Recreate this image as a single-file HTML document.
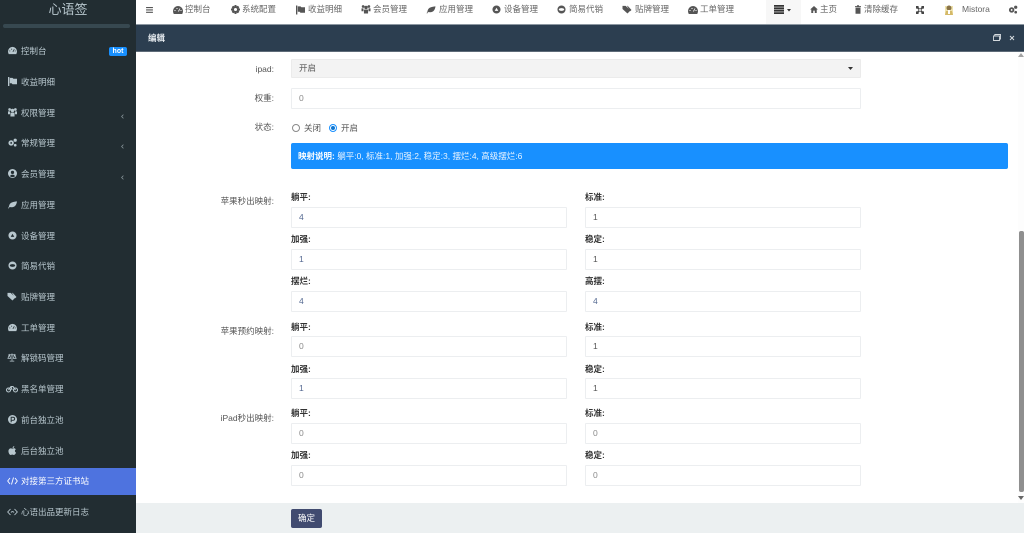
<!DOCTYPE html>
<html lang="zh"><head><meta charset="utf-8"><title>编辑</title>
<style>
html,body{margin:0;padding:0;width:1024px;height:533px;overflow:hidden;background:#fff;font-family:"Liberation Sans","Noto Sans CJK SC",sans-serif;font-size:8.5px;color:#555}
div,span,svg{position:absolute;white-space:nowrap}
#w{left:0;top:0;width:1024px;height:533px;overflow:hidden;filter:blur(.3px)}
.t{line-height:12px;height:12px}
.sb{left:0;top:0;width:136px;height:533px;background:#222d32}
.si{left:21px;color:#b8c7ce;line-height:12px;height:12px}
.ic{fill:#b8c7ce}
.ti{fill:#555}
.n{color:#666;line-height:12px;height:12px;top:3px}
.l{color:#555;line-height:12px;height:12px;text-align:right;left:180px;width:94px}
.h{color:#333;font-weight:bold;line-height:12px;height:12px}
.in{height:19px;line-height:19px;border:1px solid #eceef0;background:#fff;box-sizing:content-box;color:#8a8a8a;text-indent:7px;border-radius:1px}
.a{left:291px;width:274px}.b{left:585px;width:274px}
.v{color:#566a92}
.d{color:#555}
</style></head><body><div id="w">
<div class="sb"></div>
<div style="left:0;top:1px;width:136px;text-align:center;color:#b8c7ce;font-size:13px;line-height:18px">心语签</div>
<div style="left:3px;top:24px;width:127px;height:4px;background:#374850;border-radius:2px"></div>

<svg class="ic" style="left:8px;top:46px" width="9" height="9" viewBox="0 0 10 10"><path fill-rule="evenodd" d="M5 1a5 5 0 0 0-5 5c0 1 .3 2 .8 3h8.400c.5-1 .8-2 .8-3a5 5 0 0 0-5-5zM5 6.200l1.800-3 .5.3L5.900 6.600zM1.500 5h1v1h-1zM3.500 3h1v1h-1zM7.500 5h1v1h-1z"/></svg>
<div class="si" style="top:45px">控制台</div>
<div style="left:109px;top:47px;width:18px;height:9px;background:#1890ff;border-radius:2px;color:#fff;font-size:7px;font-weight:bold;line-height:9px;text-align:center">hot</div>

<svg class="ic" style="left:8px;top:77px" width="9" height="9" viewBox="0 0 10 10"><path d="M0 0h1.500v10H0zM2 1h3l1 1h4v6H5L4 7H2z"/></svg>
<div class="si" style="top:76px">收益明细</div>

<svg class="ic" style="left:8px;top:108px" width="9" height="9" viewBox="0 0 10 10"><circle cx="1.800" cy="1.700" r="1.500"/><circle cx="8.200" cy="1.700" r="1.500"/><circle cx="5" cy="2.800" r="1.900"/><path d="M0 3.800h2.200V7H0zM7.800 3.800H10V7H7.800zM2.700 5.200h4.600V9.500H2.700z"/></svg>
<div class="si" style="top:107px">权限管理</div>
<svg style="left:121px;top:114px" width="3" height="5" viewBox="0 0 4 6"><path d="M3.200 .5L.8 3l2.400 2.500" fill="none" stroke="#8a979d"/></svg>

<svg class="ic" style="left:8px;top:138px" width="9" height="9" viewBox="0 0 10 10"><circle cx="3.500" cy="5.500" r="3"/><circle cx="8" cy="2.500" r="1.800"/><circle cx="8" cy="8" r="1.500"/><circle cx="3.500" cy="5.500" r="1" fill="#222d32"/></svg>
<div class="si" style="top:137px">常规管理</div>
<svg style="left:121px;top:144px" width="3" height="5" viewBox="0 0 4 6"><path d="M3.200 .5L.8 3l2.400 2.500" fill="none" stroke="#8a979d"/></svg>

<svg class="ic" style="left:8px;top:169px" width="9" height="9" viewBox="0 0 10 10"><path fill-rule="evenodd" d="M5 0a5 5 0 1 0 0 10A5 5 0 0 0 5 0zM5 2a1.800 1.800 0 1 1 0 3.600A1.800 1.800 0 0 1 5 2zM2.200 8c.5-1.200 1.500-1.800 2.800-1.800S7.300 6.800 7.800 8C7 8.700 6 9 5 9s-2-.3-2.800-1z"/></svg>
<div class="si" style="top:168px">会员管理</div>
<svg style="left:121px;top:175px" width="3" height="5" viewBox="0 0 4 6"><path d="M3.200 .5L.8 3l2.400 2.500" fill="none" stroke="#8a979d"/></svg>

<svg class="ic" style="left:8px;top:200px" width="9" height="9" viewBox="0 0 10 10"><path d="M0 9c1-1 1-2 1.500-3.500C2.500 2.500 6 2 10 1.500 9.500 5 8 8 4 8 3 8 2 7.800 1.500 8L.8 9.500z"/></svg>
<div class="si" style="top:199px">应用管理</div>

<svg class="ic" style="left:8px;top:231px" width="9" height="9" viewBox="0 0 10 10"><path fill-rule="evenodd" d="M5 .5a4.500 4.500 0 1 0 0 9 4.500 4.500 0 0 0 0-9zM5 3L7 6.500H3z"/></svg>
<div class="si" style="top:230px">设备管理</div>

<svg class="ic" style="left:8px;top:261px" width="9" height="9" viewBox="0 0 10 10"><path fill-rule="evenodd" d="M5 .5a4.500 4.500 0 1 0 0 9 4.500 4.500 0 0 0 0-9zM2 5a3 1.500 0 1 0 6 0 3 1.500 0 0 0-6 0z"/></svg>
<div class="si" style="top:260px">简易代销</div>

<svg class="ic" style="left:7px;top:292px" width="10" height="9" viewBox="0 0 10 10"><path d="M0 1h3.500L9 6 5.500 9.500 0 4.500z"/><path d="M5 1h.8L10 5.500 8.500 7z"/></svg>
<div class="si" style="top:291px">贴牌管理</div>

<svg class="ic" style="left:8px;top:323px" width="9" height="9" viewBox="0 0 10 10"><path fill-rule="evenodd" d="M5 1a5 5 0 0 0-5 5c0 1 .3 2 .8 3h8.400c.5-1 .8-2 .8-3a5 5 0 0 0-5-5zM5 6.200l1.800-3 .5.3L5.900 6.600zM1.500 5h1v1h-1zM3.500 3h1v1h-1zM7.500 5h1v1h-1z"/></svg>
<div class="si" style="top:322px">工单管理</div>

<svg style="left:7px;top:353px" width="10" height="9" viewBox="0 0 10 10" fill="none" stroke="#b8c7ce" stroke-width=".9"><path d="M5 .5v8M2.500 9h5M1 2h8M2 2L.5 6h3zM8 2L6.500 6h3z"/></svg>
<div class="si" style="top:352px">解锁码管理</div>

<svg style="left:6px;top:385px" width="12" height="8" viewBox="0 0 12 8" fill="none" stroke="#b8c7ce" stroke-width="1.100"><circle cx="2.500" cy="5" r="2"/><circle cx="9.500" cy="5" r="2"/><path d="M2.500 5L5 1.500h2l2.500 3.500M5 1.500L6 5"/></svg>
<div class="si" style="top:383px">黑名单管理</div>

<svg style="left:8px;top:415px" width="9" height="9" viewBox="0 0 10 10"><circle cx="5" cy="5" r="5" fill="#b8c7ce"/><path d="M3.500 8V2.500h2.200a1.600 1.600 0 0 1 0 3.400H3.500" fill="none" stroke="#222d32" stroke-width="1.100"/></svg>
<div class="si" style="top:414px">前台独立池</div>

<svg class="ic" style="left:8px;top:446px" width="9" height="9" viewBox="0 0 10 10"><path d="M5 3c1-.7 2.800-.7 3.700.7-1.500 1-1.200 3 .3 3.700-.6 1.400-1.500 2.600-2.500 2.600-.7 0-1-.4-1.700-.4s-1 .4-1.700.4C1.700 10 .5 7.500.5 5.800.5 3.600 2 2.600 3 2.600c.8 0 1.400.4 2 .4zM5 2.500C5 1.300 6 .2 7 0c.1 1.200-.9 2.400-2 2.500z"/></svg>
<div class="si" style="top:445px">后台独立池</div>

<div style="left:0;top:468px;width:136px;height:27px;background:#4e73df"></div>
<svg style="left:7px;top:477px" width="11" height="8" viewBox="0 0 11 8" fill="none" stroke="#fff" stroke-width=".9"><path d="M3 1L.7 4 3 7M8 1l2.300 3L8 7M6.500 .5l-2 7"/></svg>
<div class="si" style="top:475px;color:#fff">对接第三方证书站</div>

<svg style="left:7px;top:508px" width="11" height="8" viewBox="0 0 11 8" fill="none" stroke="#b8c7ce" stroke-width=".9"><path d="M3.500 1L.7 4l2.800 3M7.500 1l2.800 3-2.800 3M4 4.500c.8-1.300 2.200-1.300 3 0"/></svg>
<div class="si" style="top:506px">心语出品更新日志</div>

<!-- top bar -->
<div style="left:136px;top:0;width:888px;height:24px;background:#fff"></div>
<svg style="left:146px;top:7px" width="7" height="6" viewBox="0 0 8 7" fill="#555"><path d="M0 0h8v1.300H0zM0 2.800h8v1.300H0zM0 5.600h8v1.300H0z"/></svg>

<svg class="ti" style="left:173px;top:5px" width="10" height="10" viewBox="0 0 10 10"><path fill-rule="evenodd" d="M5 1a5 5 0 0 0-5 5c0 1 .3 2 .8 3h8.400c.5-1 .8-2 .8-3a5 5 0 0 0-5-5zM5 6.200l1.800-3 .5.3L5.900 6.600zM1.500 5h1v1h-1zM3.500 3h1v1h-1zM7.500 5h1v1h-1z"/></svg>
<div class="n" style="left:185px">控制台</div>
<svg class="ti" style="left:231px;top:5px" width="9" height="9" viewBox="0 0 10 10"><path fill-rule="evenodd" d="M4 0h2l.3 1.500 1.300-.7L9.200 2.300 8.500 3.600 10 4v2l-1.500.4.700 1.300-1.600 1.500-1.300-.7L6 10H4l-.3-1.500-1.300.7L.8 7.700l.7-1.300L0 6V4l1.500-.4-.7-1.300L2.400.8l1.300.7zM5 3.300a1.700 1.700 0 1 0 0 3.400 1.700 1.700 0 0 0 0-3.400z"/></svg>
<div class="n" style="left:242px">系统配置</div>
<svg class="ti" style="left:296px;top:5px" width="9" height="10" viewBox="0 0 10 10"><path d="M0 0h1.500v10H0zM2 1h3l1 1h4v6H5L4 7H2z"/></svg>
<div class="n" style="left:308px">收益明细</div>
<svg class="ti" style="left:361px;top:5px" width="10" height="9" viewBox="0 0 10 10"><circle cx="1.800" cy="1.700" r="1.500"/><circle cx="8.200" cy="1.700" r="1.500"/><circle cx="5" cy="2.800" r="1.900"/><path d="M0 3.800h2.200V7H0zM7.800 3.800H10V7H7.800zM2.700 5.200h4.600V9.500H2.700z"/></svg>
<div class="n" style="left:373px">会员管理</div>
<svg class="ti" style="left:426px;top:5px" width="10" height="9" viewBox="0 0 10 10"><path d="M0 9c1-1 1-2 1.500-3.500C2.500 2.500 6 2 10 1.500 9.500 5 8 8 4 8 3 8 2 7.800 1.500 8L.8 9.500z"/></svg>
<div class="n" style="left:439px">应用管理</div>
<svg class="ti" style="left:492px;top:5px" width="9" height="9" viewBox="0 0 10 10"><path fill-rule="evenodd" d="M5 .5a4.500 4.500 0 1 0 0 9 4.500 4.500 0 0 0 0-9zM5 3L7 6.500H3z"/></svg>
<div class="n" style="left:504px">设备管理</div>
<svg class="ti" style="left:557px;top:5px" width="9" height="9" viewBox="0 0 10 10"><path fill-rule="evenodd" d="M5 .5a4.500 4.500 0 1 0 0 9 4.500 4.500 0 0 0 0-9zM2 5a3 1.500 0 1 0 6 0 3 1.500 0 0 0-6 0z"/></svg>
<div class="n" style="left:569px">简易代销</div>
<svg class="ti" style="left:622px;top:5px" width="10" height="9" viewBox="0 0 10 10"><path d="M0 1h3.500L9 6 5.500 9.500 0 4.500z"/><path d="M5 1h.8L10 5.500 8.500 7z"/></svg>
<div class="n" style="left:635px">贴牌管理</div>
<svg class="ti" style="left:688px;top:5px" width="10" height="10" viewBox="0 0 10 10"><path fill-rule="evenodd" d="M5 1a5 5 0 0 0-5 5c0 1 .3 2 .8 3h8.400c.5-1 .8-2 .8-3a5 5 0 0 0-5-5zM5 6.200l1.800-3 .5.3L5.900 6.600zM1.500 5h1v1h-1zM3.500 3h1v1h-1zM7.500 5h1v1h-1z"/></svg>
<div class="n" style="left:700px">工单管理</div>

<div style="left:766px;top:0;width:35px;height:24px;background:#f7f7f7"></div>
<svg style="left:774px;top:5px" width="10" height="9" viewBox="0 0 10 9" fill="#333"><path d="M0 0h10v1.800H0zM0 2.400h10v1.800H0zM0 4.800h10v1.800H0zM0 7.200h10V9H0z"/></svg>
<svg style="left:787px;top:9px" width="4" height="2.500" viewBox="0 0 5 3" fill="#333"><path d="M0 0h5L2.500 3z"/></svg>
<svg class="ti" style="left:810px;top:6px" width="8" height="7" viewBox="0 0 10 9"><path d="M5 0l5 4.500H8.500V9H6V6H4v3H1.500V4.500H0z"/></svg>
<div class="n" style="left:820px">主页</div>
<svg class="ti" style="left:855px;top:5px" width="6" height="9" viewBox="0 0 7 10"><path fill-rule="evenodd" d="M0 1h2.300V0h2.400v1H7v1.200H0zM.6 2.800h5.800V10H.6z"/></svg>
<div class="n" style="left:864px">清除缓存</div>
<svg style="left:916px;top:6px" width="8" height="8" viewBox="0 0 8 8" fill="#444"><path d="M0 0h3L2.200 .9 4 2.700 2.700 4 .9 2.200 0 3zM8 0v3l-.9-.8L5.300 4 4 2.700 5.800.9 5 0zM0 8V5l.9.8L2.700 4 4 5.300 2.200 7.100 3 8zM8 8H5l.8-.9L4 5.300 5.300 4 7.100 5.800 8 5z"/></svg>
<svg style="left:944px;top:4px" width="10" height="12" viewBox="0 0 10 12"><rect x="1" y="2" width="8" height="9" fill="#efe3ae"/><circle cx="5" cy="4" r="2.500" fill="#8a7448"/><path d="M1 11l1-4h6l1 4z" fill="#d4b968"/><rect x="4" y="6" width="2" height="4" fill="#fff"/></svg>
<div class="n" style="left:962px">Mistora</div>
<svg class="ti" style="left:1008px;top:5px" width="10" height="9" viewBox="0 0 10 10"><circle cx="3.500" cy="5.500" r="3"/><circle cx="8" cy="2.500" r="1.800"/><circle cx="8" cy="8" r="1.500"/><circle cx="3.500" cy="5.500" r="1" fill="#fff"/></svg>

<!-- dialog title -->
<div style="left:136px;top:24px;width:888px;height:28px;background:#2c3e50;border-top:1px solid #8c97a1;border-bottom:1px solid #5e6b78;box-sizing:border-box"></div>
<div class="t" style="left:148px;top:32px;color:#e8edf1;font-weight:bold">编辑</div>
<svg style="left:993px;top:34px" width="8" height="7" viewBox="0 0 8 7" fill="none" stroke="#d5dade" stroke-width=".9"><path d="M.5 2h6v4.500h-6zM1.800 2V.5h5.700v4.500h-1"/></svg>
<svg style="left:1009px;top:35px" width="6" height="6" viewBox="0 0 6 6" fill="none" stroke="#d5dade"><path d="M1 1l4 4M5 1L1 5"/></svg>

<!-- form -->
<div class="l" style="top:63px">ipad:</div>
<div style="left:291px;top:59px;width:568px;height:17px;line-height:17px;border:1px solid #ebebeb;background:#f3f3f3;text-indent:7px;color:#555;border-radius:1px">开启</div>
<svg style="left:848px;top:67px" width="5" height="3" viewBox="0 0 5 3" fill="#333"><path d="M0 0h5L2.500 3z"/></svg>

<div class="l" style="top:92px">权重:</div>
<div class="in" style="left:291px;top:88px;width:568px">0</div>

<div class="l" style="top:121px">状态:</div>
<div style="left:292px;top:124px;width:6px;height:6px;border:1px solid #8a8a8a;border-radius:50%;background:#fff"></div>
<div class="t" style="left:304px;top:122px">关闭</div>
<div style="left:329px;top:124px;width:6px;height:6px;border:1px solid #1890ff;border-radius:50%;background:#fff"></div>
<div style="left:331px;top:126px;width:4px;height:4px;border-radius:50%;background:#1076d0"></div>
<div class="t" style="left:341px;top:122px">开启</div>

<div style="left:291px;top:143px;width:717px;height:26px;line-height:27px;background:#1890ff;border-radius:2px;color:#e8f3ff;text-indent:7px"><b style="color:#fff">映射说明:</b> 躺平:0, 标准:1, 加强:2, 稳定:3, 摆烂:4, 高级摆烂:6</div>

<div class="l" style="top:195px">苹果秒出映射:</div>
<div class="h" style="left:291px;top:191px">躺平:</div><div class="h" style="left:585px;top:191px">标准:</div>
<div class="in a v" style="top:207px">4</div><div class="in b d" style="top:207px">1</div>
<div class="h" style="left:291px;top:233px">加强:</div><div class="h" style="left:585px;top:233px">稳定:</div>
<div class="in a v" style="top:249px">1</div><div class="in b d" style="top:249px">1</div>
<div class="h" style="left:291px;top:275px">摆烂:</div><div class="h" style="left:585px;top:275px">高摆:</div>
<div class="in a v" style="top:291px">4</div><div class="in b v" style="top:291px">4</div>

<div class="l" style="top:325px">苹果预约映射:</div>
<div class="h" style="left:291px;top:321px">躺平:</div><div class="h" style="left:585px;top:321px">标准:</div>
<div class="in a" style="top:336px">0</div><div class="in b d" style="top:336px">1</div>
<div class="h" style="left:291px;top:363px">加强:</div><div class="h" style="left:585px;top:363px">稳定:</div>
<div class="in a v" style="top:378px">1</div><div class="in b d" style="top:378px">1</div>

<div class="l" style="top:412px">iPad秒出映射:</div>
<div class="h" style="left:291px;top:407px">躺平:</div><div class="h" style="left:585px;top:407px">标准:</div>
<div class="in a" style="top:423px">0</div><div class="in b" style="top:423px">0</div>
<div class="h" style="left:291px;top:449px">加强:</div><div class="h" style="left:585px;top:449px">稳定:</div>
<div class="in a" style="top:465px">0</div><div class="in b" style="top:465px">0</div>

<!-- scrollbar -->
<div style="left:1018px;top:52px;width:6px;height:451px;background:#fdfdfd"></div>
<svg style="left:1018px;top:53px" width="6" height="4" viewBox="0 0 6 4" fill="#a3a3a3"><path d="M3 0l3 4H0z"/></svg>
<div style="left:1019px;top:231px;width:5px;height:261px;background:#8f8f8f;border-radius:2px"></div>
<svg style="left:1018px;top:496px" width="6" height="4" viewBox="0 0 6 4" fill="#666"><path d="M0 0h6L3 4z"/></svg>

<!-- footer -->
<div style="left:136px;top:503px;width:888px;height:30px;background:#ecf0f1"></div>
<div style="left:291px;top:509px;width:31px;height:19px;line-height:19px;background:#414b70;border-radius:2px;color:#fff;text-align:center">确定</div>
</div></body></html>
